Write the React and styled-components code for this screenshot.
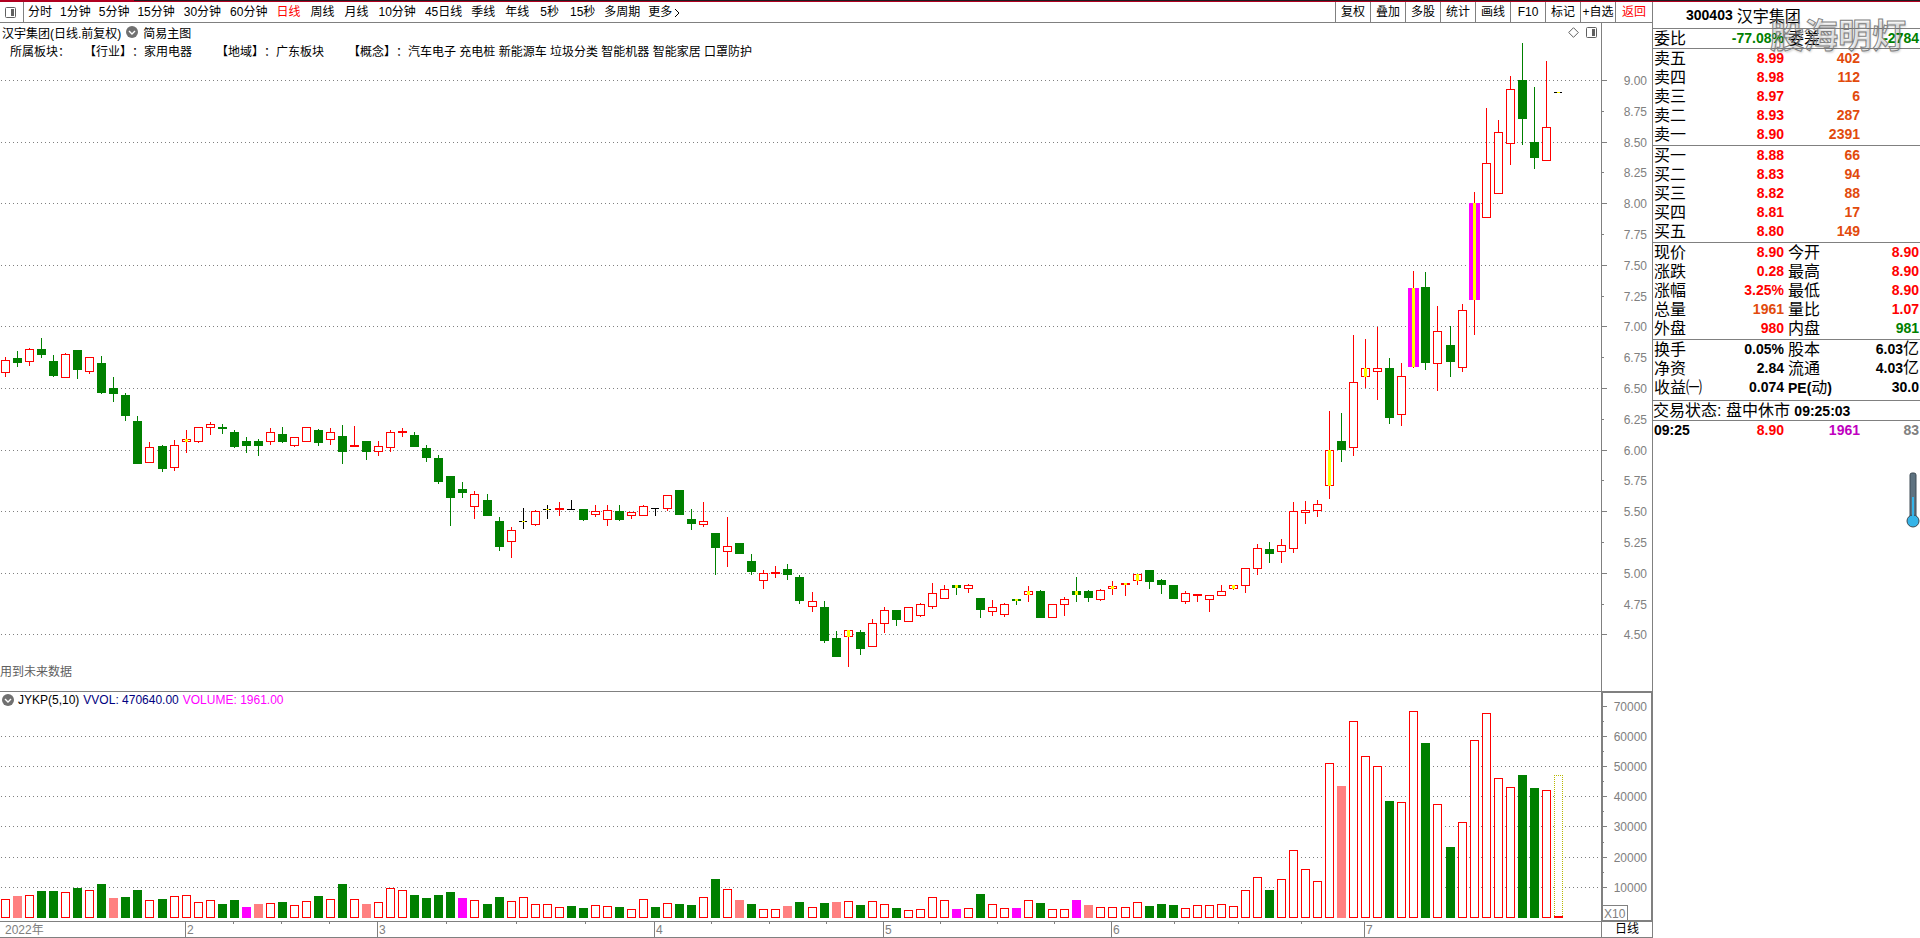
import React from "react";
import styled, { createGlobalStyle } from "styled-components";

const GlobalStyle = createGlobalStyle`
  * {
    box-sizing: border-box;
  }

  body {
    margin: 0;
    background: #fff;
    color: #000;
    font-family: "Liberation Sans", "Noto Sans CJK SC", sans-serif;
    font-size: 12px;
    text-spacing-trim: space-all;
  }
`;

const GRAY = "#808080";
const RED = "#ff0000";
const GREEN = "#008000";
const MAGENTA = "#ff00ff";
const ORANGE = "#e24a0c";

const Han = styled.span`
  font-size: 16px;
  font-weight: 400;
  line-height: 1;
`;

// 周期按钮: [文字, 左右内边距]
const periods = [
  ["分时", 4], ["1分钟", 4], ["5分钟", 4], ["15分钟", 4], ["30分钟", 5], ["60分钟", 4],
  ["日线", 5], ["周线", 5], ["月线", 5], ["10分钟", 5], ["45日线", 4], ["季线", 5],
  ["年线", 5], ["5秒", 6], ["15秒", 5], ["多周期", 4],
];

const tools = ["复权", "叠加", "多股", "统计", "画线", "F10", "标记", "+自选", "返回"];

// K线: [类型, 最高, 实体上沿, 实体下沿, 最低]
// r 阳线, g 阴线, k 十字, y 带黄色标记, m 涨停
const candles = [
  ["r", 357, 360, 373, 377], ["g", 351, 358, 363, 367], ["r", 348, 349, 362, 366], ["g", 338, 349, 355, 358],
  ["g", 355, 361, 376, 377], ["r", 353, 354, 378, 378], ["g", 350, 350, 370, 379], ["r", 357, 357, 372, 374],
  ["g", 356, 363, 393, 394], ["g", 377, 388, 394, 402], ["g", 393, 395, 416, 421], ["g", 416, 421, 464, 464],
  ["r", 442, 447, 463, 463], ["g", 445, 446, 469, 472], ["r", 440, 445, 468, 471], ["ry", 430, 439, 442, 453],
  ["r", 427, 427, 442, 443], ["r", 422, 424, 428, 435], ["g", 424, 427, 429, 434], ["g", 430, 432, 447, 448],
  ["g", 437, 441, 446, 453], ["g", 439, 441, 446, 456], ["r", 428, 432, 442, 445], ["g", 427, 434, 442, 443],
  ["r", 437, 437, 446, 447], ["r", 427, 427, 442, 442], ["g", 429, 430, 443, 446], ["r", 428, 432, 440, 445],
  ["g", 425, 436, 452, 464], ["r", 426, 445, 447, 447], ["g", 441, 441, 452, 460], ["r", 441, 446, 452, 456],
  ["r", 430, 432, 448, 452], ["r", 428, 431, 433, 437], ["g", 432, 435, 447, 447], ["g", 445, 448, 458, 462],
  ["g", 455, 458, 482, 484], ["g", 476, 476, 498, 526], ["g", 482, 489, 493, 498], ["r", 491, 494, 507, 519],
  ["g", 494, 500, 516, 516], ["g", 517, 521, 547, 551], ["r", 527, 530, 542, 558], ["ky", 508, 521, 522, 529],
  ["r", 510, 511, 525, 526], ["ky", 505, 509, 510, 519], ["r", 502, 508, 510, 516], ["k", 500, 509, 510, 510],
  ["g", 509, 509, 520, 521], ["r", 505, 511, 515, 517], ["r", 505, 510, 520, 526], ["g", 505, 511, 520, 521],
  ["r", 512, 512, 516, 519], ["r", 505, 506, 516, 516], ["k", 508, 508, 509, 516], ["r", 495, 495, 509, 511],
  ["g", 490, 490, 515, 515], ["g", 509, 519, 524, 530], ["r", 502, 521, 525, 527], ["g", 533, 533, 548, 575],
  ["r", 517, 546, 552, 567], ["g", 543, 543, 554, 554], ["g", 554, 561, 572, 575], ["r", 570, 573, 581, 589],
  ["r", 566, 572, 574, 578], ["g", 564, 569, 575, 580], ["g", 575, 577, 601, 604], ["r", 592, 601, 607, 612],
  ["g", 601, 607, 641, 643], ["g", 631, 638, 657, 657], ["ry", 630, 630, 637, 667], ["g", 630, 632, 649, 655],
  ["r", 619, 623, 647, 647], ["r", 607, 610, 624, 633], ["g", 610, 610, 620, 626], ["r", 607, 607, 622, 622],
  ["r", 603, 604, 616, 617], ["r", 583, 593, 607, 609], ["r", 585, 589, 599, 599], ["gy", 585, 585, 588, 595],
  ["r", 584, 585, 589, 593], ["g", 598, 598, 610, 618], ["r", 600, 607, 612, 616], ["r", 603, 604, 615, 617],
  ["gy", 599, 599, 601, 605], ["ry", 586, 591, 595, 602], ["g", 590, 591, 618, 618], ["r", 604, 604, 618, 618],
  ["r", 597, 599, 605, 616], ["gy", 577, 591, 595, 602], ["g", 590, 591, 598, 602], ["r", 589, 590, 600, 601],
  ["ry", 581, 586, 589, 595], ["ry", 583, 583, 585, 596], ["ry", 574, 574, 581, 585], ["g", 570, 570, 582, 589],
  ["g", 579, 580, 585, 594], ["g", 585, 585, 599, 599], ["r", 591, 593, 602, 604], ["r", 594, 594, 596, 602],
  ["r", 595, 595, 600, 612], ["r", 585, 591, 596, 596], ["ry", 585, 585, 589, 590], ["r", 568, 568, 586, 593],
  ["r", 544, 548, 569, 575], ["g", 542, 549, 554, 563], ["r", 539, 545, 552, 563], ["r", 502, 511, 549, 553],
  ["r", 501, 510, 513, 524], ["r", 500, 504, 511, 517], ["ry", 411, 450, 486, 499], ["g", 413, 441, 450, 462],
  ["r", 335, 382, 448, 456], ["ry", 339, 368, 377, 388], ["r", 327, 368, 372, 400], ["g", 358, 368, 418, 424],
  ["r", 363, 376, 415, 426], ["rm", 271, 288, 367, 368], ["g", 272, 287, 363, 370], ["r", 306, 331, 364, 391],
  ["g", 326, 345, 362, 377], ["r", 304, 310, 368, 372], ["rm", 192, 203, 300, 335], ["r", 108, 163, 218, 218],
  ["r", 120, 132, 194, 194], ["r", 76, 89, 144, 165], ["g", 43, 80, 119, 145], ["g", 87, 142, 158, 169],
  ["r", 61, 127, 161, 161], ["ky", 92, 92, 93, 93],
];

// 成交量柱: 类型 + 柱高
const volumes = (
  "r19 p22 r23 g27 g27 r26 g30 r28 g34 p20 g21 g28 r18 g19 r22 r23 r16 r18 g14 g18 " +
  "m11 p14 r15 g16 r13 r17 g22 r19 g34 r19 p14 r16 r30 r28 g23 g20 g23 g26 m20 r18 " +
  "g14 g21 r17 r21 r14 r14 r11 g12 g10 r13 r12 g11 r9 r19 g11 r15 g14 g13 r21 g39 " +
  "r29 p18 g14 r9 r9 p12 g16 r11 g15 p16 r17 g13 r17 r14 g10 r8 r9 r21 r18 m9 " +
  "r10 g24 r14 r10 m10 r18 g15 r9 r9 m18 p13 r11 r11 r11 r16 g12 g14 g13 r10 r13 " +
  "r13 r14 r12 r28 r41 g28 r39 r68 r49 r37 r155 p132 r197 r162 r152 g117 r116 r207 g175 r114 " +
  "g71 r96 r178 r205 r140 r131 g143 g130 r128 d143"
).split(" ");

const months = [["2", 185], ["3", 377], ["4", 654], ["5", 883], ["6", 1111], ["7", 1364]];
const weeks = [233, 281, 329, 446, 516, 585, 711, 769, 826, 940, 997, 1054, 1174, 1238, 1301];

const sells = [["卖五", "8.99", "402"], ["卖四", "8.98", "112"], ["卖三", "8.97", "6"], ["卖二", "8.93", "287"], ["卖一", "8.90", "2391"]];
const buys = [["买一", "8.88", "66"], ["买二", "8.83", "94"], ["买三", "8.82", "88"], ["买四", "8.81", "17"], ["买五", "8.80", "149"]];

const quotes = [
  ["现价", "8.90", RED, "今开", "8.90", RED],
  ["涨跌", "0.28", RED, "最高", "8.90", RED],
  ["涨幅", "3.25%", RED, "最低", "8.90", RED],
  ["总量", "1961", ORANGE, "量比", "1.07", RED],
  ["外盘", "980", RED, "内盘", "981", GREEN],
];

const basics = [
  ["换手", "0.05%", "#000", "股本", <>6.03<Han>亿</Han></>, "#000"],
  ["净资", "2.84", "#000", "流通", <>4.03<Han>亿</Han></>, "#000"],
  ["收益㈠", "0.074", "#000", <><b>PE(</b>动<b>)</b></>, "30.0", "#000"],
];

const PRICE_TOP = 23;
const VOLUME_BASE = 226;

const barX = (i) => 1 + Math.floor(12.0375 * i + 0.513);
const priceY = (price) => Math.round(80 + (9 - price) * 123.2) - PRICE_TOP;
const volumeY = (vol) => Math.round(13.6 + ((70000 - vol) / 10000) * 30.2);

const priceLevels = Array.from({ length: 19 }, (_, i) => 9 - i * 0.25);
const volumeLevels = [70000, 60000, 50000, 40000, 30000, 20000, 10000];

const colors = { r: RED, g: GREEN, k: "#000", p: "#ff8080", m: MAGENTA };

const GridLine = ({ y }) => (
  <line x1="1" x2="100%" y1={y + 0.5} y2={y + 0.5} stroke={GRAY} strokeDasharray="1 3" />
);

const Candle = ({ index, data }) => {
  const [type, high, top, bottom, low] = data;
  const x = barX(index);
  const y = top - PRICE_TOP;
  const h = bottom - top;
  const color = colors[type[0]];
  const limitUp = type[1] === "m";

  return (
    <g>
      <rect x={x + 4} y={high - PRICE_TOP} width="1" height={low - high} fill={color} />
      {limitUp ? (
        <rect x={x - 1} y={y} width="11" height={h} fill={MAGENTA} />
      ) : (
        <rect x={x} y={y} width={type[0] === "k" ? 8 : 9} height={h} fill={color} />
      )}
      {type === "r" || type === "ry" ? (
        h > 2 && <rect x={x + 1} y={y + 1} width="7" height={h - 2} fill="#fff" />
      ) : null}
      {type[1] && <rect x={x + 3} y={y} width="3" height={h} fill="#ff0" />}
    </g>
  );
};

const VolumeBar = ({ index, data }) => {
  const type = data[0];
  const h = Number(data.slice(1));
  const x = barX(index);
  const y = VOLUME_BASE - h;

  if (type === "d") {
    return (
      <g>
        <rect x={x} y={y} width="9" height={h} fill="#fff" />
        <path
          d={`M${x + 0.5} ${VOLUME_BASE}V${y + 0.5}H${x + 8.5}V${VOLUME_BASE}`}
          fill="none"
          stroke="#b8b800"
          strokeDasharray="1 1"
        />
        <rect x={x} y={VOLUME_BASE - 2} width="9" height="2" fill={RED} />
      </g>
    );
  }
  return (
    <g>
      <rect x={x} y={y} width="9" height={h} fill={colors[type]} />
      {type === "r" && <rect x={x + 1} y={y + 1} width="7" height={h - 2} fill="#fff" />}
    </g>
  );
};

const PanelIcon = () => (
  <svg width="13" height="13" viewBox="0 0 13 13" fill="none" aria-hidden="true">
    <rect x="1.5" y="1.5" width="10" height="10" rx="1" stroke="#606060" />
    <rect x="7" y="3" width="3" height="7" fill="#606060" />
  </svg>
);

const DropIcon = () => (
  <svg width="12" height="12" viewBox="0 0 12 12" aria-hidden="true">
    <circle cx="6" cy="6" r="6" fill="#707070" />
    <path d="M3 5l3 3 3-3" fill="none" stroke="#fff" strokeWidth="1.4" />
  </svg>
);

const Thermometer = () => (
  <svg width="14" height="56" viewBox="0 0 14 56" aria-hidden="true">
    <rect x="4" y="1" width="6" height="46" rx="2" fill="#5e7280" stroke="#3c4a54" />
    <circle cx="7" cy="49" r="6" fill="#35b4e8" stroke="#3c4a54" />
    <rect x="6" y="25" width="2" height="22" fill="#35b4e8" />
  </svg>
);

const Columns = ({ wide }) => (
  <colgroup>
    <col width="52" />
    <col width="80" />
    <col width={wide ? 76 : 54} />
    <col />
  </colgroup>
);

const QuoteTable = ({ rows, space }) => (
  <Table $space={space}>
    <Columns />
    <tbody>
      {rows.map(([label, value, color, label2, value2, color2], i) => (
        <tr key={i}>
          <Label>{label}</Label>
          <Value $color={color}>{value}</Value>
          <Label $second>{label2}</Label>
          <Value $color={color2}>{value2}</Value>
        </tr>
      ))}
    </tbody>
  </Table>
);

const OrderTable = ({ rows }) => (
  <Table $space={1}>
    <Columns wide />
    <tbody>
      {rows.map(([label, price, amount]) => (
        <tr key={label}>
          <Label>{label}</Label>
          <Value $color={RED}>{price}</Value>
          <Value $color={ORANGE}>{amount}</Value>
          <td />
        </tr>
      ))}
    </tbody>
  </Table>
);

const App = () => {
  return (
    <Page>
      <GlobalStyle />
      <TopStrip />
      <Body>
        <Left>
          <Toolbar>
            <IconButton aria-label="侧栏"><PanelIcon /></IconButton>
            <Periods>
              {periods.map(([name, pad]) => (
                <PeriodButton key={name} $pad={pad} $active={name === "日线"}>{name}</PeriodButton>
              ))}
              <PeriodButton $pad={4}>
                更多
                <svg width="9" height="9" viewBox="0 0 9 9" fill="none" aria-hidden="true">
                  <path d="M3 1l4 4-4 4" stroke="#000" />
                </svg>
              </PeriodButton>
            </Periods>
            {tools.map((name) => (
              <ToolButton key={name} $red={name === "返回"}>{name}</ToolButton>
            ))}
          </Toolbar>

          <Charts>
            <PricePane>
              <Plot>
                {priceLevels.filter((p) => (p * 2) % 1 === 0).map((p) => <GridLine key={p} y={priceY(p)} />)}
                {candles.map((c, i) => <Candle key={i} index={i} data={c} />)}
              </Plot>
              <Caption>
                <TitleRow>
                  <span>汉宇集团(日线.前复权)</span>
                  <DropIcon />
                  <span>简易主图</span>
                  <PaneIcons>
                    <svg width="11" height="11" viewBox="0 0 11 11" fill="none" aria-hidden="true">
                      <path d="M5.5 .7l4.8 4.8-4.8 4.8L.7 5.5z" stroke="#606060" />
                    </svg>
                    <PanelIcon />
                  </PaneIcons>
                </TitleRow>
                <TagRow>
                  <TagLead>所属板块：</TagLead>
                  <span>【行业】：家用电器</span>
                  <span>【地域】：广东板块</span>
                  <span>【概念】：汽车电子 充电桩 新能源车 垃圾分类 智能机器 智能家居 口罩防护</span>
                </TagRow>
                <Warning>用到未来数据</Warning>
              </Caption>
            </PricePane>
            <Axis>
              {priceLevels.map((p) => {
                const major = (p * 2) % 1 === 0;
                return (
                  <g key={p}>
                    <rect x="0" y={priceY(p)} width={major ? 5 : 2} height="1" fill={GRAY} />
                    <text x="45" y={priceY(p) + 5} textAnchor="end">{p.toFixed(2)}</text>
                  </g>
                );
              })}
            </Axis>

            <VolumePane>
              <Plot>
                {volumeLevels.slice(1).map((v) => <GridLine key={v} y={volumeY(v)} />)}
                {volumes.map((v, i) => <VolumeBar key={i} index={i} data={v} />)}
              </Plot>
              <VolumeTitle>
                <DropIcon />
                <span>JYKP(5,10)</span>
                <Reading $color="#000080">VVOL: 470640.00</Reading>
                <Reading $color={MAGENTA}>VOLUME: 1961.00</Reading>
              </VolumeTitle>
            </VolumePane>
            <Axis $boxed>
              {volumeLevels.map((v) => (
                <g key={v}>
                  <rect x="0" y={volumeY(v)} width="5" height="1" fill={GRAY} />
                  {v > 10000 && <rect x="0" y={volumeY(v - 5000)} width="2" height="1" fill={GRAY} />}
                  <text x="45" y={volumeY(v) + 5} textAnchor="end">{v}</text>
                </g>
              ))}
              <rect x="0.5" y="213.5" width="25" height="15" fill="#fff" stroke={GRAY} />
              <text x="2" y="226">X10</text>
            </Axis>

            <TimeAxis>
              {weeks.map((x) => <rect key={x} x={x} y="0" width="1" height="2" fill={GRAY} />)}
              <text x="5" y="12">2022年</text>
              {months.map(([name, x]) => (
                <g key={name}>
                  <rect x={x} y="0" width="1" height="15" fill={GRAY} />
                  <text x={x + 2} y="12">{name}</text>
                </g>
              ))}
            </TimeAxis>
            <PeriodCell>日线</PeriodCell>
          </Charts>
        </Left>

        <Side>
          <StockName><b>300403</b>汉宇集团</StockName>
          <QuoteTable space={0} rows={[["委比", "-77.08%", GREEN, "委差", "-2784", GREEN]]} />
          <OrderTable rows={sells} />
          <OrderTable rows={buys} />
          <QuoteTable space={1} rows={quotes} />
          <QuoteTable space={3} rows={basics} />
          <Status>交易状态: 盘中休市 <b>09:25:03</b></Status>
          <Table $space={0}>
            <Columns wide />
            <tbody>
              <tr>
                <Value $left $color="#000">09:25</Value>
                <Value $color={RED}>8.90</Value>
                <Value $color="#c000c0">1961</Value>
                <Value $color={GRAY}>83</Value>
              </tr>
            </tbody>
          </Table>
          <Gauge><Thermometer /></Gauge>
          <Watermark>股海明灯</Watermark>
        </Side>
      </Body>
    </Page>
  );
};

export default App;

const Page = styled.div`
  display: flex;
  flex-direction: column;
  min-height: 100vh;
`;

const TopStrip = styled.div`
  height: 2px;
  background: linear-gradient(#b00020, #b00020) 0 0 / 134px 2px no-repeat,
    linear-gradient(#201c20 50%, #b00020 50%);
`;

const Body = styled.div`
  display: flex;
  flex: 1;
`;

const Left = styled.main`
  display: flex;
  flex-direction: column;
  flex: 1;
  min-width: 0;
`;

const Toolbar = styled.div`
  display: flex;
  height: 21px;
  border-bottom: 1px solid ${GRAY};
`;

const Periods = styled.div`
  display: flex;
  flex: 1;
  min-width: 0;
`;

const Button = styled.button`
  display: flex;
  align-items: center;
  justify-content: center;
  padding: 0;
  border: 0;
  background: none;
  color: #000;
  font: inherit;
  line-height: 20px;
  white-space: nowrap;
  cursor: pointer;
`;

const IconButton = styled(Button)`
  width: 24px;
  padding-right: 2px;
  border-right: 1px solid ${GRAY};
`;

const PeriodButton = styled(Button)`
  padding: 0 ${(p) => p.$pad}px;
  color: ${(p) => (p.$active ? RED : "#000")};
`;

const ToolButton = styled(Button)`
  width: 35px;
  border-left: 1px solid ${GRAY};
  color: ${(p) => (p.$red ? RED : "#000")};

  &:last-child {
    width: 37px;
  }
`;

const Charts = styled.div`
  display: grid;
  grid-template-columns: minmax(0, 1fr) 51px;
  grid-template-rows: minmax(668px, 1fr) 230px 17px;
  flex: 1;
`;

const PricePane = styled.section`
  display: grid;
  overflow: hidden;

  > * {
    grid-area: 1 / 1;
  }
`;

const VolumePane = styled(PricePane)`
  border-top: 1px solid ${GRAY};
`;

const Plot = styled.svg`
  display: block;
  width: 100%;
  height: 100%;
  shape-rendering: crispEdges;
`;

const Axis = styled.svg`
  display: block;
  width: 100%;
  height: 100%;
  border-left: 1px solid ${GRAY};
  border-top: ${(p) => (p.$boxed ? `1px solid ${GRAY}` : "0")};
  box-shadow: ${(p) => (p.$boxed ? `inset 0 0 0 1px ${GRAY}` : "none")};
  fill: ${GRAY};
  font-size: 12px;
`;

const Caption = styled.div`
  display: flex;
  flex-direction: column;
`;

const TitleRow = styled.div`
  display: flex;
  align-items: center;
  gap: 5px;
  height: 18px;
  padding: 0 3px 0 2px;
`;

const PaneIcons = styled.div`
  display: flex;
  align-items: center;
  gap: 6px;
  margin-left: auto;
`;

const TagRow = styled.div`
  display: flex;
  gap: 24px;
  padding-left: 10px;
  line-height: 22px;
  white-space: nowrap;
`;

const TagLead = styled.span`
  width: 50px;
`;

const Warning = styled.div`
  margin-top: auto;
  color: #606060;
  line-height: 38px;
`;

const VolumeTitle = styled.div`
  display: flex;
  align-items: center;
  gap: 4px;
  height: 16px;
  padding-left: 2px;
`;

const Reading = styled.span`
  color: ${(p) => p.$color};
`;

const TimeAxis = styled.svg`
  display: block;
  width: 100%;
  height: 100%;
  border-top: 1px solid ${GRAY};
  border-bottom: 1px solid ${GRAY};
  fill: ${GRAY};
  font-size: 12px;
`;

const PeriodCell = styled.div`
  border: 1px solid ${GRAY};
  border-right: 0;
  line-height: 15px;
  text-align: center;
`;

const Side = styled.aside`
  position: relative;
  width: 268px;
  border-left: 1px solid ${GRAY};
  font-size: 16px;

  b {
    font-size: 14px;
  }
`;

const StockName = styled.div`
  display: flex;
  align-items: center;
  gap: 4px;
  height: 26px;
  padding-left: 33px;
`;

const Table = styled.table`
  width: 100%;
  table-layout: fixed;
  border-collapse: separate;
  border-spacing: 0;
  border-top: 1px solid ${GRAY};
  padding-bottom: ${(p) => p.$space}px;
  line-height: 19px;

  td {
    height: 19px;
    padding: 0;
    white-space: nowrap;
  }

  b {
    line-height: 1;
  }
`;

const Label = styled.td`
  && {
    padding-left: ${(p) => (p.$second ? 3 : 1)}px;
  }
`;

const Value = styled.td`
  color: ${(p) => p.$color};
  font-size: 14px;
  font-weight: 700;
  text-align: ${(p) => (p.$left ? "left" : "right")};

  && {
    padding: 0 1px;
  }
`;

const Status = styled.div`
  height: 20px;
  border-top: 1px solid ${GRAY};
  line-height: 19px;
`;

const Gauge = styled.div`
  display: flex;
  justify-content: flex-end;
  padding-top: 32px;
  overflow: hidden;
`;

const Watermark = styled.div`
  position: absolute;
  top: 10px;
  right: 14px;
  color: transparent;
  font-size: 34px;
  font-weight: 700;
  line-height: 48px;
  -webkit-text-stroke: 1px #808080;
  text-shadow: 1px 2px 2px rgba(0, 0, 0, 0.15);
  pointer-events: none;
`;
